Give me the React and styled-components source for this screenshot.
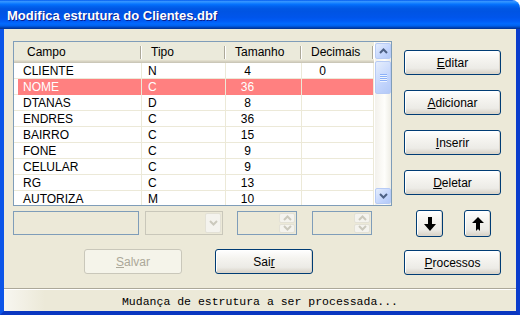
import React from "react";
import styled, { createGlobalStyle, css } from "styled-components";

const Global = createGlobalStyle`
  body { margin: 0; background: #fff; }
  * { box-sizing: border-box; }
`;

const Window = styled.div`
  width: 520px;
  height: 315px;
  display: flex;
  flex-direction: column;
  font-family: "Liberation Sans", Arial, sans-serif;
  font-size: 12px;
  color: #000;
`;

const TitleBar = styled.div`
  height: 29px;
  flex: none;
  display: flex;
  align-items: center;
  padding: 2px 0 0 7px;
  border-top-right-radius: 8px;
  background: linear-gradient(
    #0058ee 0%, #3593ff 5%, #288eff 8%, #127dff 12%, #036ffc 16%,
    #0262ee 22%, #0057e5 30%, #0054e3 40%, #0055eb 60%, #005bf5 72%,
    #026afe 82%, #0062ef 88%, #0052d6 92%, #0040ab 96%, #003092 100%
  );
`;

const Title = styled.span`
  font-weight: bold;
  font-size: 13px;
  color: #fff;
  text-shadow: 1px 1px 0 #0a1e8e;
`;

const Frame = styled.div`
  flex: 1;
  display: flex;
  flex-direction: column;
  background: #ece9d8;
  border-left: 4px solid #0c55e8;
  border-right: 4px solid #0a3ccc;
  border-bottom: 4px solid #0a37c0;
`;

const Content = styled.div`
  height: 259px;
  display: flex;
  padding: 12px 0 0 9px;
`;

const LeftCol = styled.div`
  width: 379px;
  display: flex;
  flex-direction: column;
`;

const Grid = styled.div`
  height: 165px;
  display: flex;
  border: 1px solid #7f9db9;
  background: #fff;
  overflow: hidden;
`;

const Table = styled.div`
  width: 360px;
  display: flex;
  flex-direction: column;
`;

const COLS = "4px 124px 84px 76px 72px";

const HeaderRow = styled.div`
  height: 21px;
  flex: none;
  display: grid;
  grid-template-columns: ${COLS};
  background: #ebeadb;
  box-shadow: inset 0 -1px #cbc7b8, inset 0 -2px #d6d2c2, inset 0 -3px #e2decd;
`;

const HeaderCell = styled.div`
  padding: 2px 0 0 9px;
  line-height: 16px;
  white-space: nowrap;
  background:
    linear-gradient(#aca899, #aca899) right 1px top 4px / 1px 13px no-repeat,
    linear-gradient(#fff, #fff) right 0 top 4px / 1px 13px no-repeat;
`;

const Row = styled.div`
  height: 16px;
  flex: none;
  display: grid;
  grid-template-columns: ${COLS};
  border-bottom: 1px solid #ece9d8;
`;

const Cell = styled.div`
  line-height: 15px;
  padding-top: 1px;
  padding-left: ${p => p.$pad || 0}px;
  padding-right: ${p => p.$padR || 0}px;
  text-align: ${p => (p.$center ? "center" : "left")};
  border-right: 1px solid #ece9d8;
  white-space: nowrap;
  ${p => p.$sel && css`
    background: #ff8080;
    color: #fff;
  `}
`;

const Indicator = styled.div``;

const ScrollBar = styled.div`
  width: 16px;
  margin-left: 1px;
  padding: 1px 0;
  display: flex;
  flex-direction: column;
  background: linear-gradient(to right, #f3f1ec, #fefefb 60%, #eeede5);
`;

const ScrollBtn = styled.div`
  height: 16px;
  flex: none;
  display: flex;
  align-items: center;
  justify-content: center;
  border: 1px solid #b7cbf5;
  border-radius: 2px;
  background: linear-gradient(135deg, #e6eefc, #c3d5fd 60%, #b3c9f7);
`;

const Thumb = styled(ScrollBtn)`
  height: 33px;
  margin-top: 2px;
  flex-direction: column;
  gap: 1px;
`;

const Grip = styled.div`
  width: 7px;
  height: 1px;
  background: #8cb0f8;
  box-shadow: 0 1px #eef4fe;
`;

const Track = styled.div`
  flex: 1;
`;

const Chevron = ({ dir, color = "#4d6185" }) => (
  <svg width="9" height="6" viewBox="0 0 9 6">
    <polyline
      points={dir === "up" ? "1,5 4.5,1.5 8,5" : "1,1 4.5,4.5 8,1"}
      fill="none"
      stroke={color}
      strokeWidth="2"
    />
  </svg>
);

const EditRow = styled.div`
  height: 24px;
  margin-top: 5px;
  display: flex;
`;

const Field = styled.div`
  width: ${p => p.$w}px;
  margin-left: ${p => p.$ml || 0}px;
  height: 24px;
  display: flex;
  justify-content: flex-end;
  padding: 1px;
  border: 1px solid ${p => (p.$faded ? "#c9c7ba" : "#7f9db9")};
  background: #ece9d8;
`;

const DropBtn = styled.div`
  width: 16px;
  display: flex;
  align-items: center;
  justify-content: center;
  border: 1px solid #e3e1d6;
  border-radius: 2px;
  background: #f4f3ee;
`;

const SpinBtns = styled.div`
  width: 16px;
  display: flex;
  flex-direction: column;
  gap: 1px;
`;

const SpinHalf = styled(DropBtn)`
  width: 16px;
  flex: 1;
`;

const BottomRow = styled.div`
  margin-top: 14px;
  padding-left: 71px;
  display: flex;
  gap: 33px;
`;

const Button = styled.button`
  width: ${p => p.$w || 97}px;
  height: ${p => p.$h || 25}px;
  margin-top: ${p => p.$mt || 0}px;
  padding: 0;
  display: flex;
  align-items: center;
  justify-content: center;
  font-family: "Liberation Sans", Arial, sans-serif;
  font-size: 12px;
  color: #000;
  border: 1px solid #003c74;
  border-radius: 3px;
  background: linear-gradient(#ffffff, #f5f4f0 35%, #ecebe6 75%, #d6d0c5);
  box-shadow: inset -1px -1px 0 #dcd6cb, inset 1px 1px 0 #fff;
  ${p => p.disabled && css`
    color: #aca899;
    border-color: #c9c7ba;
    background: #f5f4ea;
    box-shadow: none;
  `}
`;

const RightCol = styled.div`
  margin-left: 12px;
  padding-top: 9px;
  display: flex;
  flex-direction: column;
  gap: 15px;
`;

const ArrowRow = styled.div`
  display: flex;
  gap: 21px;
  padding-left: 12px;
`;

const StatusBar = styled.div`
  height: 23px;
  flex: none;
  display: flex;
  align-items: center;
  justify-content: center;
  border-top: 1px solid #aca899;
  box-shadow: inset 0 1px #fff;
  background: linear-gradient(to right, #f7f6f0, #ece9d8 8%);
  font-family: "Liberation Mono", "Courier New", monospace;
  font-size: 11.5px;
  padding-top: 2px;
`;

const ArrowIcon = ({ up }) => (
  <svg width="12" height="14" viewBox="0 0 12 14">
    {up ? (
      <polygon points="6,0 12,6 8,6 8,14 6,12 4,14 4,6 0,6" fill="#000" />
    ) : (
      <polygon points="4,0 8,0 8,7 12,7 6,14 0,7 4,7" fill="#000" />
    )}
  </svg>
);

const rows = [
  ["CLIENTE", "N", "4", "0"],
  ["NOME", "C", "36", ""],
  ["DTANAS", "D", "8", ""],
  ["ENDRES", "C", "36", ""],
  ["BAIRRO", "C", "15", ""],
  ["FONE", "C", "9", ""],
  ["CELULAR", "C", "9", ""],
  ["RG", "C", "13", ""],
  ["AUTORIZA", "M", "10", ""],
];

export default function App() {
  return (
    <>
      <Global />
      <Window>
        <TitleBar>
          <Title>Modifica estrutura do Clientes.dbf</Title>
        </TitleBar>
        <Frame>
          <Content>
            <LeftCol>
              <Grid>
                <Table>
                  <HeaderRow>
                    <Indicator />
                    <HeaderCell>Campo</HeaderCell>
                    <HeaderCell>Tipo</HeaderCell>
                    <HeaderCell>Tamanho</HeaderCell>
                    <HeaderCell>Decimais</HeaderCell>
                  </HeaderRow>
                  {rows.map((r, i) => {
                    const sel = i === 1;
                    return (
                      <Row key={r[0]}>
                        <Indicator />
                        <Cell $sel={sel} $pad={5}>{r[0]}</Cell>
                        <Cell $sel={sel} $pad={6}>{r[1]}</Cell>
                        <Cell $sel={sel} $center $padR={32}>{r[2]}</Cell>
                        <Cell $sel={sel} $center $padR={30}>{r[3]}</Cell>
                      </Row>
                    );
                  })}
                </Table>
                <ScrollBar>
                  <ScrollBtn><Chevron dir="up" /></ScrollBtn>
                  <Thumb>
                    <Grip /><Grip /><Grip /><Grip />
                  </Thumb>
                  <Track />
                  <ScrollBtn><Chevron dir="down" /></ScrollBtn>
                </ScrollBar>
              </Grid>
              <EditRow>
                <Field $w={126} />
                <Field $w={78} $ml={6} $faded>
                  <DropBtn><Chevron dir="down" color="#cbc9bd" /></DropBtn>
                </Field>
                <Field $w={60} $ml={14}>
                  <SpinBtns>
                    <SpinHalf><Chevron dir="up" color="#cbc9bd" /></SpinHalf>
                    <SpinHalf><Chevron dir="down" color="#cbc9bd" /></SpinHalf>
                  </SpinBtns>
                </Field>
                <Field $w={60} $ml={15}>
                  <SpinBtns>
                    <SpinHalf><Chevron dir="up" color="#cbc9bd" /></SpinHalf>
                    <SpinHalf><Chevron dir="down" color="#cbc9bd" /></SpinHalf>
                  </SpinBtns>
                </Field>
              </EditRow>
              <BottomRow>
                <Button disabled $w={98}><u>S</u>alvar</Button>
                <Button $w={98}>Sai<u>r</u></Button>
              </BottomRow>
            </LeftCol>
            <RightCol>
              <Button><u>E</u>ditar</Button>
              <Button><u>A</u>dicionar</Button>
              <Button><u>I</u>nserir</Button>
              <Button><u>D</u>eletar</Button>
              <ArrowRow>
                <Button $w={27} $h={27}><ArrowIcon /></Button>
                <Button $w={27} $h={27}><ArrowIcon up /></Button>
              </ArrowRow>
              <Button $mt={-2}><u>P</u>rocessos</Button>
            </RightCol>
          </Content>
          <StatusBar>Mudança de estrutura a ser processada...</StatusBar>
        </Frame>
      </Window>
    </>
  );
}
